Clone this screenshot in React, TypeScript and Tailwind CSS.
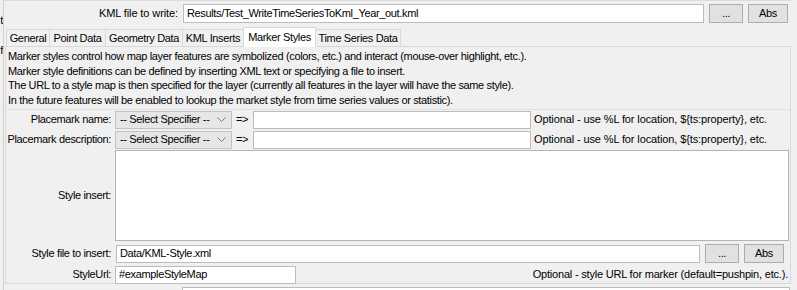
const fieldCls = "h-[18px] bg-white border border-[#bcbcbc] flex items-center px-[3px] whitespace-nowrap overflow-hidden";
const btnCls = "h-[19px] bg-[#e1e1e1] border border-[#adadad] flex items-center justify-center";

function Combo() {
  return (
    <div className="w-[117px] h-[18px] bg-[#e6e6e6] border border-[#c2c2c2] flex items-center pl-[4px] pr-[3px]">
      <span className="flex-1 whitespace-nowrap">-- Select Specifier --</span>
      <svg width="9" height="6" viewBox="0 0 9 6" className="mr-[2px]">
        <polyline points="0.5,0.5 4.5,4.5 8.5,0.5" fill="none" stroke="#7a7a7a" strokeWidth="1" />
      </svg>
    </div>
  );
}

function SpecRow({ label }: { label: string }) {
  return (
    <div className="flex items-center h-[18px]">
      <div className="w-[105px] text-right whitespace-nowrap">{label}</div>
      <div className="ml-[4px]">
        <Combo />
      </div>
      <span className="w-[21px] pl-[4px]">=&gt;</span>
      <div className={`${fieldCls} w-[278px]`} />
      <span className="ml-[3px] whitespace-nowrap tracking-[-0.12px]">Optional - use %L for location, ${"{ts:property}"}, etc.</span>
    </div>
  );
}

const tabs = ["General", "Point Data", "Geometry Data", "KML Inserts", "Marker Styles", "Time Series Data"];
const tabW = ["w-[44px]", "w-[57px]", "w-[78px]", "w-[62px]", "w-[73px]", "w-[86px]"];

export default function App() {
  return (
    <div className="w-[797px] h-[290px] overflow-hidden bg-[#f0f0f0] text-[11px] tracking-[-0.35px] leading-none text-black flex font-['Liberation_Sans',Arial,sans-serif]">
      {/* cut-off left panel */}
      <div className="w-[4px] border-r border-[#d0d0d0] overflow-hidden flex flex-col items-end">
        <span className="mt-[15px] whitespace-nowrap">t</span>
        <span className="mt-[19px] whitespace-nowrap">f</span>
      </div>

      <div className="w-[787px] flex flex-col border-t border-[#dcdcdc] overflow-hidden">
        {/* top row */}
        <div className="flex items-center mt-[3px] h-[19px]">
          <div className="w-[174px] text-right whitespace-nowrap tracking-[-0.1px]">KML file to write:</div>
          <div className={`${fieldCls} ml-[5px] w-[521px] h-[19px]`}>Results/Test_WriteTimeSeriesToKml_Year_out.kml</div>
          <div className={`${btnCls} ml-[5px] w-[34px]`}>...</div>
          <div className={`${btnCls} ml-[5px] w-[40px]`}>Abs</div>
        </div>

        {/* tabs */}
        <div className="flex items-end mt-[4px] ml-[2px] h-[19px] relative z-10">
          {tabs.map((t, i) =>
            t === "Marker Styles" ? (
              <div key={t} className={`${tabW[i]} h-[20px] -mb-px -mr-px bg-white border border-b-0 border-[#d9d9d9] flex items-center justify-center whitespace-nowrap`}>
                {t}
              </div>
            ) : (
              <div key={t} className={`${tabW[i]} h-[17px] -mr-px bg-[#f0f0f0] border border-b-0 border-[#d9d9d9] flex items-center justify-center whitespace-nowrap`}>
                {t}
              </div>
            )
          )}
        </div>

        {/* tab content */}
        <div className="ml-[1px] w-[786px] h-[238px] border border-[#d9d9d9] flex flex-col">
          <div className="pl-[2px] pt-[2px] pb-[1px] leading-[14.7px] border-b border-[#e0e0e0]">
            <div>Marker styles control how map layer features are symbolized (colors, etc.) and interact (mouse-over highlight, etc.).</div>
            <div>Marker style definitions can be defined by inserting XML text or specifying a file to insert.</div>
            <div>The URL to a style map is then specified for the layer (currently all features in the layer will have the same style).</div>
            <div>In the future features will be enabled to lookup the market style from time series values or statistic).</div>
          </div>

          <div className="mt-[1px] flex flex-col">
            <SpecRow label="Placemark name:" />
            <div className="mt-[2px]">
              <SpecRow label="Placemark description:" />
            </div>

            <div className="flex items-center mt-[1px]">
              <div className="w-[105px] text-right whitespace-nowrap">Style insert:</div>
              <div className="ml-[4px] w-[674px] h-[91px] bg-white border border-[#b4b4b4]" />
            </div>

            <div className="flex items-center mt-[4px] h-[18px]">
              <div className="w-[105px] text-right whitespace-nowrap">Style file to insert:</div>
              <div className={`${fieldCls} ml-[5px] w-[584px]`}>Data/KML-Style.xml</div>
              <div className={`${btnCls} ml-[5px] w-[34px]`}>...</div>
              <div className={`${btnCls} ml-[5px] w-[40px]`}>Abs</div>
            </div>

            <div className="flex items-center mt-[3px] h-[18px]">
              <div className="w-[105px] text-right whitespace-nowrap">StyleUrl:</div>
              <div className={`${fieldCls} ml-[4px] w-[181px]`}>#exampleStyleMap</div>
              <div className="flex-1 text-right pr-[2px] whitespace-nowrap tracking-[-0.2px]">Optional - style URL for marker (default=pushpin, etc.).</div>
            </div>
          </div>
        </div>

        {/* next row, cut off */}
        <div className="flex mt-[3px]">
          <div className="ml-[178px] w-[608px] h-[18px] bg-white border border-[#bcbcbc]" />
        </div>
      </div>
    </div>
  );
}
